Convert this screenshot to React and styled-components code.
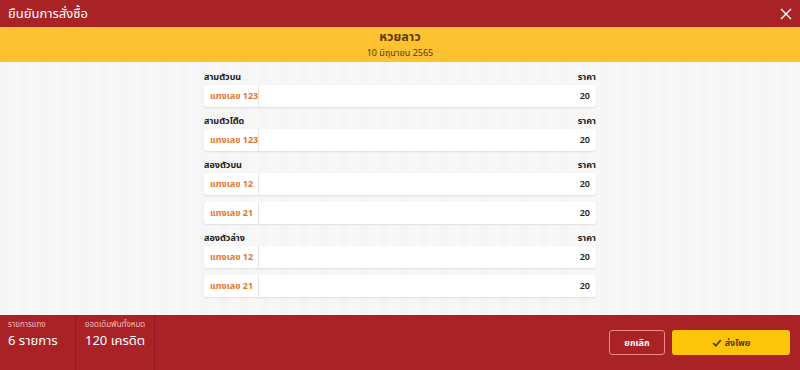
import React from 'react';
import styled, { createGlobalStyle } from 'styled-components';

const GlobalStyle = createGlobalStyle`
    html, body {
        margin: 0;
        padding: 0;
        font-family: "Noto Sans Thai", "Noto Sans", "Liberation Sans", sans-serif;
    }
`;

const Modal = styled.div`
    width: 800px;
    height: 370px;
    display: flex;
    flex-direction: column;
    background: #f6f6f6;
    overflow: hidden;
`;

const TitleBar = styled.div`
    height: 27px;
    flex: none;
    background: #a92226;
    color: #fff;
    display: flex;
    align-items: center;
    justify-content: space-between;
    padding: 0 8px 0 8px;
    font-size: 13px;
`;

const CloseButton = styled.button`
    border: none;
    background: none;
    padding: 0;
    display: flex;
    cursor: pointer;
`;

const LottoBand = styled.div`
    height: 35px;
    flex: none;
    background: #fec12f;
    display: flex;
    flex-direction: column;
    align-items: center;
    justify-content: center;
    color: #5a3a05;
    box-shadow: 0 1px 2px rgba(0, 0, 0, 0.15);
`;

const LottoName = styled.div`
    font-size: 12.5px;
    font-weight: 700;
    line-height: 15px;
`;

const LottoDate = styled.div`
    font-size: 9px;
    line-height: 12px;
    margin-top: 2px;
`;

const Body = styled.div`
    flex: 1;
    display: flex;
    justify-content: center;
    padding-top: 6px;
    background-color: #f7f7f7;
    background-image: repeating-linear-gradient(90deg, rgba(0,0,0,0.006) 0 8px, transparent 8px 20px);
`;

const List = styled.div`
    width: 392px;
    display: flex;
    flex-direction: column;
`;

const GroupHead = styled.div`
    display: flex;
    justify-content: space-between;
    align-items: center;
    height: 17px;
    font-size: 9px;
    font-weight: 700;
    color: #222;
`;

const Row = styled.div`
    display: flex;
    height: 22px;
    background: #fff;
    border-radius: 3px;
    box-shadow: 0 1px 2px rgba(0, 0, 0, 0.1);
    margin-bottom: ${p => (p.$gap ? '7px' : '5px')};
    font-size: 9px;
`;

const NumberCell = styled.div`
    width: 55px;
    flex: none;
    display: flex;
    align-items: center;
    padding-left: 6px;
    box-sizing: border-box;
    border-right: 1px solid #e6e6e6;
    color: #e7762b;
    font-weight: 700;
    white-space: nowrap;
`;

const PriceCell = styled.div`
    flex: 1;
    display: flex;
    align-items: center;
    justify-content: flex-end;
    padding-right: 6px;
    color: #222;
    font-weight: 600;
`;

const Footer = styled.div`
    height: 55px;
    flex: none;
    background: #a92226;
    display: flex;
    align-items: stretch;
`;

const Stat = styled.div`
    width: ${p => p.$w}px;
    box-sizing: border-box;
    border-right: 1px solid #8e1a1d;
    padding: 4px 8px 0;
    display: flex;
    flex-direction: column;
    align-items: ${p => (p.$center ? 'center' : 'flex-start')};
`;

const StatLabel = styled.div`
    font-size: 8px;
    color: #f3b9b9;
    line-height: 13px;
`;

const StatValue = styled.div`
    font-size: 13px;
    color: #fff;
    line-height: 19px;
`;

const Actions = styled.div`
    margin-left: auto;
    display: flex;
    align-items: center;
    gap: 7px;
    padding-right: 10px;
`;

const Button = styled.button`
    height: 25px;
    width: ${p => p.$w}px;
    border-radius: 3px;
    font-family: inherit;
    font-size: 9px;
    font-weight: 700;
    display: flex;
    align-items: center;
    justify-content: center;
    gap: 3px;
    cursor: pointer;
    border: ${p => (p.$primary ? 'none' : '1px solid #ee8b8b')};
    background: ${p => (p.$primary ? '#fec40a' : '#a92226')};
    color: ${p => (p.$primary ? '#5a3a05' : '#fff')};
`;

const groups = [
    { title: 'สามตัวบน', items: [{ num: '123', price: 20 }] },
    { title: 'สามตัวโต๊ด', items: [{ num: '123', price: 20 }] },
    { title: 'สองตัวบน', items: [{ num: '12', price: 20 }, { num: '21', price: 20 }] },
    { title: 'สองตัวล่าง', items: [{ num: '12', price: 20 }, { num: '21', price: 20 }] },
];

export default function App() {
    return (
        <>
            <GlobalStyle />
            <Modal>
                <TitleBar>
                    <span>ยืนยันการสั่งซื้อ</span>
                    <CloseButton>
                        <svg width="12" height="12" viewBox="0 0 12 12">
                            <path d="M1 1 L11 11 M11 1 L1 11" stroke="#fff" strokeWidth="1.4" />
                        </svg>
                    </CloseButton>
                </TitleBar>
                <LottoBand>
                    <LottoName>หวยลาว</LottoName>
                    <LottoDate>10 มิถุนายน 2565</LottoDate>
                </LottoBand>
                <Body>
                    <List>
                        {groups.map(g => (
                            <React.Fragment key={g.title}>
                                <GroupHead>
                                    <span>{g.title}</span>
                                    <span>ราคา</span>
                                </GroupHead>
                                {g.items.map((it, i) => (
                                    <Row key={i} $gap={i < g.items.length - 1}>
                                        <NumberCell>แทงเลข {it.num}</NumberCell>
                                        <PriceCell>{it.price}</PriceCell>
                                    </Row>
                                ))}
                            </React.Fragment>
                        ))}
                    </List>
                </Body>
                <Footer>
                    <Stat $w={76}>
                        <StatLabel>รายการแทง</StatLabel>
                        <StatValue>6 รายการ</StatValue>
                    </Stat>
                    <Stat $w={79} $center>
                        <StatLabel>ยอดเดิมพันทั้งหมด</StatLabel>
                        <StatValue>120 เครดิต</StatValue>
                    </Stat>
                    <Actions>
                        <Button $w={56}>ยกเลิก</Button>
                        <Button $w={118} $primary>
                            <svg width="10" height="10" viewBox="0 0 10 10">
                                <path d="M1.2 5.2 L3.8 7.8 L8.8 2.2" stroke="#5a3a05" strokeWidth="1.8" fill="none" />
                            </svg>
                            ส่งโพย
                        </Button>
                    </Actions>
                </Footer>
            </Modal>
        </>
    );
}
